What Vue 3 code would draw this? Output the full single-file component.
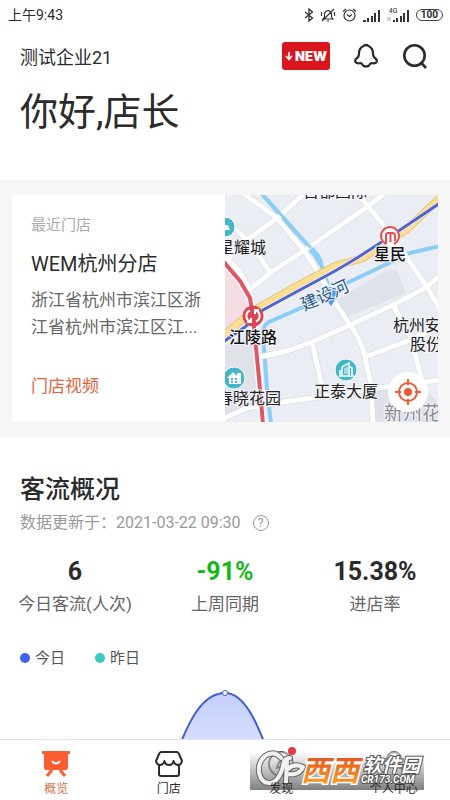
<script setup>
import { ref } from "vue";

const activeTab = ref("overview");

const stats = [
  { label: "今日客流(人次)", value: "6" },
  { label: "上周同期", value: "-91%", down: true },
  { label: "进店率", value: "15.38%" },
];

const roads = [
  "M18 -2L52 23L80 57L92 75L104 96",
  "M80 -2L52 23L22 45L2 65",
  "M160 -2L142 12L80 55L45 78L24 95",
  "M6 30L25 48L45 77",
  "M-2 60L14 76L25 95",
  "M132 -2L165 38L202 92L216 116",
  "M215 80L202 92L172 108L125 130L87 147L62 156L34 162",
  "M87 147L99 200",
  "M108 104L125 130Q136 144 140 162T146 190L148 229",
  "M140 162L185 145L215 131",
  "M168 110L185 140L198 190",
  "M-2 224L22 213L58 207L110 200L152 193L215 185",
];
</script>

<template>
  <div class="page">
    <header class="status-bar">
      <span class="clock">上午9:43</span>
      <div class="status-icons">
        <svg width="10" height="14" viewBox="0 0 10 14" fill="none" stroke="#333" stroke-width="1.3">
          <path d="M1 4L8.500 10L5 13V1L8.500 4L1 10" />
        </svg>
        <svg width="16" height="14" viewBox="0 0 16 14" fill="none" stroke="#333" stroke-width="1.2">
          <path d="M3 11H13L11.500 9V6Q11 3 8 2.500Q5 3 4.500 6V9ZM7 13H9M14 1L2 13M1.500 4V8M14.500 4V8" />
        </svg>
        <svg width="15" height="14" viewBox="0 0 15 14" fill="none" stroke="#333" stroke-width="1.2">
          <circle cx="7.500" cy="7.500" r="5.500" />
          <path d="M5 6.500L7.500 8.500L10 6.500M1 3.500L4 1M14 3.500L11 1" />
        </svg>
        <svg width="18" height="13" viewBox="0 0 18 13" fill="#333">
          <path d="M0 11h3v2H0zM4 9h2v4H4zM8 7h2v6H8zM11 4h2v9h-2zM15 1h2v12h-2z" />
        </svg>
        <span class="network">
          <small>4G</small>
          <svg width="23" height="13" viewBox="0 0 23 13" fill="#333">
            <path d="M6 11h2v2H6zM9 9h2v4H9zM13 7h2v6h-2zM16 4h2v9h-2zM20 1h2v12h-2z" />
            <path d="M1 8v4M3 12V8" stroke="#aaa" />
          </svg>
        </span>
        <span class="battery">100</span>
      </div>
    </header>

    <main class="content">
      <section class="hero">
        <div class="hero-bar">
          <span class="company">测试企业21</span>
          <div class="hero-actions">
            <button type="button" class="new-button">
              <svg width="8" height="10" viewBox="0 0 8 10" fill="none" stroke="#fff" stroke-width="1.6">
                <path d="M4 1V9M1 5L4 8.500L7 5" />
              </svg>
              NEW
            </button>
            <button type="button" class="icon-button" aria-label="消息">
              <svg width="24" height="26" viewBox="0 0 24 26" fill="none" stroke="#2b2b2b" stroke-width="2.2" stroke-linejoin="round">
                <path d="M9.500 3Q12 1 14.500 3Q19 5 19 10.500Q19 14 21.500 15.500Q23.500 17 22.500 19Q21 21 17.500 20Q16 20.500 15 22.500Q12 24.500 9 22.500Q8 20.500 6.500 20Q3 21 1.500 19Q.500 17 2.500 15.500Q5 14 5 10.500Q5 5 9.500 3Z" />
              </svg>
            </button>
            <button type="button" class="icon-button" aria-label="搜索">
              <svg width="26" height="26" viewBox="0 0 26 26" fill="none" stroke="#2b2b2b" stroke-width="2.600">
                <circle cx="12.500" cy="12.500" r="10.200" />
                <path d="M18.500 19L24 25" />
              </svg>
            </button>
          </div>
        </div>
        <h1 class="greeting">你好,店长</h1>
      </section>

      <section class="store-band">
        <div class="store-card">
          <div class="store-info">
            <span class="store-hint">最近门店</span>
            <h2 class="store-name">WEM杭州分店</h2>
            <p class="store-address">浙江省杭州市滨江区浙江省杭州市滨江区江...</p>
            <a href="#" class="store-video">门店视频</a>
          </div>
          <div class="store-map">
            <svg class="map" viewBox="0 0 213 227" preserveAspectRatio="xMidYMid slice">
              <rect width="213" height="227" fill="#ebedf5" />
              <path d="M0 68L15 87L27 115L0 136Z" fill="#f4dce3" />
              <path d="M0 150L30 138L36 208L0 220Z" fill="#e0e2e9" />
              <path d="M112 105L160 76L172 75L181 98L122 122Z" fill="#dfe2e8" />
              <path d="M150 195L196 190L213 208V227H150Z" fill="#dfe1ea" />
              <g fill="none">
                <path d="M36 -2L58 23L87 55L96 69L103 90" stroke="#8ccdf2" stroke-width="4" />
                <path d="M215 51L185 58L122 88L78 112L44 127Q38 130 38 140L42 193L46 229" stroke="#8ccdf5" stroke-width="4" />
                <path v-for="d in roads" :key="`edge-${d}`" :d="d" stroke="#d6d7dc" stroke-width="6" />
                <path v-for="d in roads" :key="d" :d="d" stroke="#fff" stroke-width="5" />
                <path d="M42 4L60 24L86 53" stroke="#8ccdf2" stroke-width="3" />
                <path d="M86 54L92 61L96 69" stroke="#8ccdf2" stroke-width="6" />
                <path d="M-2 141L28 116L70 92L110 71L138 63L155 51L182 34L215 3" stroke="#e8c475" stroke-width="8" />
                <path d="M-2 141L28 116L70 92L110 71L138 63L155 51L182 34L215 3" stroke="#fbdf94" stroke-width="6" />
                <path d="M-2 147L20 132L38 115L110 76L132 63L155 48L172 37L215 8" stroke="#fff" stroke-width="4" />
                <path d="M-2 147L20 132L38 115L110 76L132 63L155 48L172 37L215 8" stroke="#4e64d2" stroke-width="3" />
                <path d="M-2 66L15 86L25 103L28 122L30 143L34 183L38 229" stroke="#fff" stroke-width="7" />
                <path d="M-2 66L15 86L25 103L28 122L30 143L34 183L38 229" stroke="#df5665" stroke-width="4" />
              </g>

              <g fill="#45b5c8" stroke="#fff">
                <circle cx="0" cy="32" r="10" />
                <circle cx="9" cy="183" r="11" />
                <circle cx="121" cy="175" r="11" />
              </g>
              <path d="M-4 35H5L3 30H0V26H-3Z" fill="#fff" />
              <path d="M2 183L8 177L12 181V178H16V189H4V183Z" fill="#fff" />
              <path d="M6 183h2v2H6zM10 183h2v2h-2zM6 186h2v2H6zM10 186h2v2h-2z" fill="#45b5c8" />
              <path d="M117 181V172L124 168V181M124 171L127 173V181M114 181H129M115 175V181" fill="none" stroke="#fff" stroke-width="1.500" />
              <path d="M120 173V179M122 172V179" stroke="#fff" />

              <circle cx="28" cy="121" r="10.500" fill="#d84853" />
              <g fill="none" stroke="#fff" stroke-width="2">
                <path d="M25 115.500A6 6 0 0 0 25 126.500M31 115.500A6 6 0 0 1 31 126.500" />
                <path d="M22 127H26V123M34 115H30V119" />
              </g>
              <circle cx="165" cy="41" r="10" fill="#fff" />
              <g fill="none" stroke="#df5058" stroke-width="2">
                <path d="M161 49A9 9 0 1 1 169 49" />
                <path d="M161 49V40Q161 38 163 38H167Q170 38 170 41V46M165.500 38V47" />
              </g>
              <path d="M106 111C103 106 99 103 99 99A7 7 0 0 1 113 99C113 103 109 106 106 111Z" fill="#4b9bf5" />

              <g class="map-text">
                <text x="78" y="2">百都国际</text>
                <text x="-7" y="58">星耀城</text>
                <text x="-8" y="209">春晓花园</text>
                <text x="89" y="202">正泰大厦</text>
                <text x="168" y="136">杭州安</text>
                <text x="185" y="155">股份</text>
                <text x="159" y="225" class="faded">新州花</text>
                <text class="strong" x="4" y="148">江陵路</text>
                <text class="strong" x="149" y="65">星民</text>
                <text class="river" transform="translate(79 116) rotate(-24)">建设河</text>
              </g>
            </svg>
            <button type="button" class="locate-button" aria-label="定位">
              <svg width="28" height="28" viewBox="0 0 28 28" fill="none" stroke="#ee5a35" stroke-width="2">
                <circle cx="14" cy="14" r="9" />
                <path d="M14 1V7M14 21V27M1 14H7M21 14H27" />
                <circle cx="14" cy="14" r="4" fill="#ee5a35" stroke="none" />
              </svg>
            </button>
          </div>
        </div>
      </section>

      <section class="traffic">
        <h2 class="traffic-title">客流概况</h2>
        <p class="updated">
          数据更新于：2021-03-22 09:30
          <button type="button" class="help-button" aria-label="说明">?</button>
        </p>
        <dl class="stats">
          <div v-for="item in stats" :key="item.label" class="stat">
            <dt>{{ item.label }}</dt>
            <dd :class="{ down: item.down }">{{ item.value }}</dd>
          </div>
        </dl>
        <ul class="legend">
          <li class="today">今日</li>
          <li class="yesterday">昨日</li>
        </ul>
        <svg class="chart" viewBox="0 0 450 80" preserveAspectRatio="xMidYMin slice">
          <defs>
            <linearGradient id="area" x1="0" y1="0" x2="0" y2="1">
              <stop offset="0" stop-color="#c3cffb" />
              <stop offset="1" stop-color="#dfe5fd" />
            </linearGradient>
          </defs>
          <path d="M173 80C188 38 202 10 225 10C246 10 259 44 272 80" fill="url(#area)" stroke="#3f5fd3" stroke-width="2" />
          <circle cx="225" cy="10" r="2.500" fill="#fff" stroke="#3f5fd3" />
        </svg>
      </section>
    </main>

    <nav class="tab-bar">
      <button type="button" class="tab" :class="{ active: activeTab === 'overview' }" @click="activeTab = 'overview'">
        <svg width="28" height="26" viewBox="0 0 28 26">
          <path d="M0 0H28V3H26V17Q26 19 24 19H4Q2 19 2 17V3H0Z" fill="#fb5c31" />
          <path d="M10 19L5 25M18 19L23 25" stroke="#fb5c31" stroke-width="3" />
          <path d="M10 10Q14 15 18 10" fill="none" stroke="#fff" stroke-width="2" />
        </svg>
        <span>概览</span>
      </button>
      <button type="button" class="tab" :class="{ active: activeTab === 'store' }" @click="activeTab = 'store'">
        <svg width="28" height="26" viewBox="0 0 28 26" fill="none" stroke="#2b2b2b" stroke-width="2" stroke-linejoin="round">
          <path d="M6 1H22Q23 1 24 3L27 10Q26 14 23 14Q20 14 18.500 10Q18 14 14 14Q10 14 9.500 10Q8 14 5 14Q2 14 1 10L4 3Q5 1 6 1ZM4 14V23Q4 25 6 25H22Q24 25 24 23V14" />
        </svg>
        <span>门店</span>
      </button>
      <button type="button" class="tab" :class="{ active: activeTab === 'discover' }" @click="activeTab = 'discover'">
        <svg width="28" height="26" viewBox="0 0 28 26" fill="none" stroke="#555" stroke-width="2">
          <circle cx="14" cy="13" r="12" />
          <path d="M18 9L16 15L10 17L12 11Z" />
        </svg>
        <span>发现</span>
      </button>
      <button type="button" class="tab" :class="{ active: activeTab === 'mine' }" @click="activeTab = 'mine'">
        <svg width="28" height="26" viewBox="0 0 28 26" fill="none" stroke="#666" stroke-width="2">
          <circle cx="14" cy="8" r="7" />
          <path d="M3 26Q4 15 14 15T25 26" />
        </svg>
        <span>个人中心</span>
      </button>

      <div class="site-badge">
        <svg width="174" height="38" viewBox="0 0 174 38">
          <defs>
            <linearGradient id="brand" x1="0" y1="0" x2="0" y2="1">
              <stop offset="0" stop-color="#e4501e" />
              <stop offset="1" stop-color="#fba526" />
            </linearGradient>
          </defs>
          <g fill="none" stroke-linecap="round" stroke-linejoin="round">
            <path d="M31 6Q24 -2 15 4Q8 10 9 20Q11 32 21 31Q31 28 34 9M34 9Q36 6 40 6M37 9L36 30M38 17Q44 11 53 15Q49 24 38 22" stroke="#666" stroke-width="6" />
            <path d="M31 6Q24 -2 15 4Q8 10 9 20Q11 32 21 31Q31 28 34 9M34 9Q36 6 40 6M37 9L36 30M38 17Q44 11 53 15Q49 24 38 22" stroke="#f1f1f1" stroke-width="4" />
          </g>
          <circle cx="42" cy="-1" r="4" fill="#e33b42" />
          <text x="51" y="29" class="badge-brand">西西</text>
          <text x="113" y="20" class="badge-name">软件园</text>
          <text x="111" y="31" class="badge-site">CR173.COM</text>
        </svg>
      </div>
    </nav>
  </div>
</template>

<style>
body {
  margin: 0;
  background: #fff;
}
</style>

<style scoped>
.page {
  display: flex;
  flex-direction: column;
  height: 100vh;
  overflow: hidden;
  color: #2b2b2b;
  font-family: Roboto, "Noto Sans CJK SC", sans-serif;
}

h1,
h2,
p,
dl,
dd,
ul {
  margin: 0;
  padding: 0;
}

button {
  padding: 0;
  border: 0;
  background: none;
  color: inherit;
  font: inherit;
  cursor: pointer;
}

svg {
  display: block;
}

.status-bar {
  display: flex;
  flex: none;
  align-items: center;
  justify-content: space-between;
  height: 30px;
  padding: 0 7px 0 8px;
  font-size: 14px;
  line-height: 20px;
}

.status-icons {
  display: flex;
  align-items: center;
  gap: 6px;
}

.network {
  position: relative;
}

.network small {
  position: absolute;
  top: -2px;
  left: 2px;
  font-size: 7px;
  line-height: 8px;
}

.battery {
  padding: 0 4px;
  border: 1px solid #444;
  border-radius: 6px;
  font-size: 10px;
  font-weight: 700;
  line-height: 10px;
}

.content {
  flex: 1;
  min-height: 0;
  overflow-y: auto;
  scrollbar-width: none;
}

.hero {
  padding: 12px 22px 46px 20px;
}

.hero-bar {
  display: flex;
  align-items: center;
  justify-content: space-between;
  height: 28px;
}

.company {
  padding-top: 4px;
  font-size: 18px;
  line-height: 28px;
}

.hero-actions {
  display: flex;
  align-items: center;
  gap: 24px;
}

.new-button {
  display: flex;
  align-items: center;
  justify-content: center;
  gap: 2px;
  width: 48px;
  height: 28px;
  border-radius: 3px;
  background: #d8161b;
  color: #fff;
  font-family: Inter, sans-serif;
  font-size: 13px;
  font-weight: 900;
}

.greeting {
  margin-top: 20px;
  font-size: 38px;
  font-weight: 400;
  line-height: 44px;
}

.store-band {
  padding: 15px 12px;
  background: #f6f6f6;
}

.store-card {
  display: grid;
  grid-template-columns: 1fr 1fr;
  background: #fff;
}

.store-info {
  display: flex;
  flex-direction: column;
  align-items: flex-start;
  padding: 20px 16px 22px 19px;
}

.store-hint {
  color: #aaa;
  font-size: 15px;
  line-height: 20px;
}

.store-name {
  margin-top: 15px;
  font-size: 20px;
  font-weight: 400;
  line-height: 28px;
}

.store-address {
  margin-top: 9px;
  color: #666;
  font-size: 17px;
  line-height: 27px;
}

.store-video {
  margin-top: 31px;
  color: #e0643f;
  font-size: 17px;
  line-height: 28px;
  text-decoration: none;
}

.store-map {
  position: relative;
}

.map {
  position: absolute;
  width: 100%;
  height: 100%;
}

.map-text {
  fill: #222;
  stroke: #f4f5f9;
  stroke-width: 2px;
  paint-order: stroke;
  font-size: 16px;
}

.map-text .strong {
  fill: #111;
  font-weight: 500;
}

.map-text .faded {
  fill: #8c8e98;
  font-size: 19px;
}

.map-text .river {
  fill: #285b8c;
  font-size: 17px;
}

.locate-button {
  display: grid;
  place-items: center;
  position: absolute;
  right: 10px;
  bottom: 10px;
  width: 40px;
  height: 40px;
  border-radius: 50%;
  background: #fff;
}

.traffic-title {
  padding: 35px 20px 0;
  font-size: 25px;
  font-weight: 500;
  line-height: 36px;
}

.updated {
  display: flex;
  align-items: center;
  gap: 12px;
  padding: 3px 20px 0;
  color: #999;
  font-size: 16px;
  line-height: 24px;
}

.help-button {
  width: 16px;
  height: 16px;
  border: 1px solid #999;
  border-radius: 50%;
  font-size: 12px;
  line-height: 14px;
}

.stats {
  display: grid;
  grid-template-columns: repeat(3, 1fr);
  margin-top: 21px;
  text-align: center;
}

.stat {
  display: flex;
  flex-direction: column-reverse;
}

.stat dt {
  color: #666;
  font-size: 17px;
  line-height: 32px;
}

.stat dd {
  font-size: 25px;
  font-weight: 700;
  line-height: 32px;
}

.stat .down {
  color: #15b71b;
}

.legend {
  display: flex;
  gap: 30px;
  padding: 26px 20px 0;
  list-style: none;
  color: #555;
  font-size: 15px;
  line-height: 24px;
}

.legend li {
  display: flex;
  align-items: center;
  gap: 5px;
}

.legend li::before {
  width: 10px;
  height: 10px;
  border-radius: 50%;
  background: #3e63ee;
  content: "";
}

.legend .yesterday::before {
  background: #3bc8c6;
}

.chart {
  width: 100%;
  height: 80px;
  margin-top: 13px;
}

.tab-bar {
  display: grid;
  position: relative;
  flex: none;
  grid-template-columns: repeat(4, 1fr);
  border-top: 1px solid #e2e2e2;
  background: #fff;
}

.tab {
  display: flex;
  flex-direction: column;
  align-items: center;
  gap: 4px;
  padding: 11px 0 3px;
  font-size: 12px;
  line-height: 16px;
}

.tab span {
  position: relative;
  z-index: 1;
}

.tab.active {
  color: #d8704f;
}

.site-badge {
  position: absolute;
  right: 26px;
  bottom: 10px;
  background: linear-gradient(rgba(255, 255, 255, 0.4), rgba(105, 105, 105, 0.85));
  pointer-events: none;
}

.site-badge svg {
  overflow: visible;
}

.site-badge text {
  font-style: italic;
  font-weight: 700;
  paint-order: stroke;
}

.badge-brand {
  fill: url(#brand);
  stroke: #fff;
  stroke-width: 3px;
  font-size: 29px;
}

.badge-name {
  fill: #fff;
  stroke: #555;
  stroke-width: 2px;
  font-size: 19px;
}

.badge-site {
  fill: #fff;
  stroke: #555;
  stroke-width: 2px;
  font-size: 10px;
}
</style>
